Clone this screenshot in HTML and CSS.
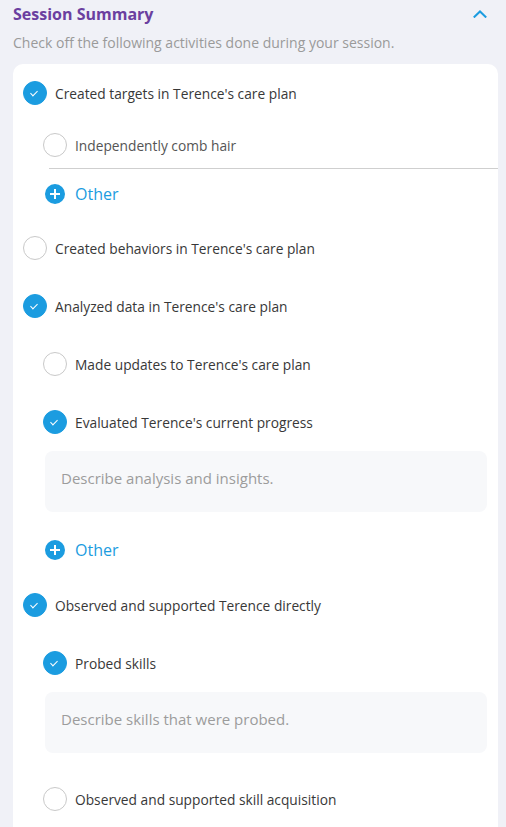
FILE: index.html
```html
<!DOCTYPE html>
<html lang="en">
<head>
<meta charset="utf-8">
<title>Session Summary</title>
<link rel="stylesheet" href="styles.css">
</head>
<body>
<section class="panel">
  <header class="head">
    <h2 class="title">Session Summary</h2>
    <button class="toggle" aria-label="Collapse">
      <svg width="14" height="8" viewBox="0 0 14 8"><path d="M1.5 6.8 L7 1.5 L12.5 6.8" fill="none" stroke="#1b9ce0" stroke-width="2" stroke-linecap="square"/></svg>
    </button>
  </header>
  <p class="hint">Check off the following activities done during your session.</p>

  <div class="card">
    <div class="item r58">
      <span class="box on"></span><span class="label">Created targets in Terence's care plan</span>
    </div>
    <div class="sub">
      <div class="item r46">
        <span class="box"></span><span class="label light">Independently comb hair</span>
      </div>
      <div class="divider"></div>
      <div class="other r50">
        <span class="plus"></span><span class="other-text">Other</span>
      </div>
    </div>

    <div class="item r58">
      <span class="box"></span><span class="label">Created behaviors in Terence's care plan</span>
    </div>

    <div class="item r58">
      <span class="box on"></span><span class="label">Analyzed data in Terence's care plan</span>
    </div>
    <div class="sub">
      <div class="item r58">
        <span class="box"></span><span class="label">Made updates to Terence's care plan</span>
      </div>
      <div class="item r58">
        <span class="box on"></span><span class="label">Evaluated Terence's current progress</span>
      </div>
      <div class="note">Describe analysis and insights.</div>
      <div class="other r52 after-note">
        <span class="plus"></span><span class="other-text">Other</span>
      </div>
    </div>

    <div class="item r58">
      <span class="box on"></span><span class="label">Observed and supported Terence directly</span>
    </div>
    <div class="sub">
      <div class="item r58">
        <span class="box on"></span><span class="label">Probed skills</span>
      </div>
      <div class="note">Describe skills that were probed.</div>
      <div class="item r58 after-note2">
        <span class="box"></span><span class="label">Observed and supported skill acquisition</span>
      </div>
    </div>
  </div>
</section>
</body>
</html>
```

FILE: styles.css
```css
* { box-sizing: border-box; }
html, body { margin: 0; padding: 0; }
body {
  background: #f0f1f7;
  font-family: "Open Sans", "Noto Sans", sans-serif;
  color: #333;
  height: 827px;
  overflow: hidden;
}
.panel {
  padding: 0 8px 0 13px;
}
.head {
  display: flex;
  align-items: center;
  justify-content: space-between;
  height: 28px;
}
.title {
  margin: 0;
  font-size: 16px;
  line-height: 28px;
  font-weight: 700;
  color: #6b3fa0;
}
.toggle {
  border: 0;
  background: none;
  padding: 0;
  margin-right: 11px;
  width: 14px;
  height: 8px;
  display: flex;
}
.hint {
  margin: 5px 0 11px;
  font-size: 14px;
  line-height: 20px;
  color: #9a9a9a;
}
.card {
  background: #fff;
  border-radius: 10px 10px 0 0;
  padding: 0 11px 20px 10px;
}
.item {
  display: flex;
  align-items: center;
  gap: 8px;
}
.r58 { height: 58px; }
.r46 { height: 46px; }
.r50 { height: 50px; }
.r52 { height: 52px; }
.box {
  width: 24px;
  height: 24px;
  border-radius: 50%;
  border: 1px solid #c9c9c9;
  background: #fff;
  flex: none;
  position: relative;
}
.box.on {
  background: #1b9ce0;
  border-color: #1b9ce0;
}
.box.on::after {
  content: "";
  position: absolute;
  left: 8px;
  top: 6.5px;
  width: 3px;
  height: 6px;
  border: solid #fff;
  border-width: 0 1.5px 1.5px 0;
  transform: rotate(45deg);
  transform-origin: center;
}
.label {
  font-size: 13.75px;
  color: #383838;
  white-space: nowrap;
}
.label.light { color: #555; }
.sub {
  padding-left: 20px;
}
.divider {
  height: 1px;
  background: #cfcfcf;
  margin: 0 -11px 0 6px;
}
.other {
  display: flex;
  align-items: center;
  gap: 10px;
  padding-left: 2px;
}
.plus {
  width: 20px;
  height: 20px;
  border-radius: 50%;
  background: #1b9ce0;
  flex: none;
  position: relative;
}
.plus::before, .plus::after {
  content: "";
  position: absolute;
  background: #fff;
  left: 50%;
  top: 50%;
  transform: translate(-50%, -50%);
}
.plus::before { width: 10px; height: 2px; }
.plus::after { width: 2px; height: 10px; }
.other-text {
  font-size: 16px;
  color: #1b9ce0;
}
.note {
  margin-left: 2px;
  height: 61px;
  background: #f7f8fa;
  border-radius: 8px;
  padding: 16px 16px;
  font-size: 15px;
  line-height: 22px;
  color: #9c9c9c;
}
.after-note { margin-top: 12px; }
.after-note2 { margin-top: 17px; }
```
